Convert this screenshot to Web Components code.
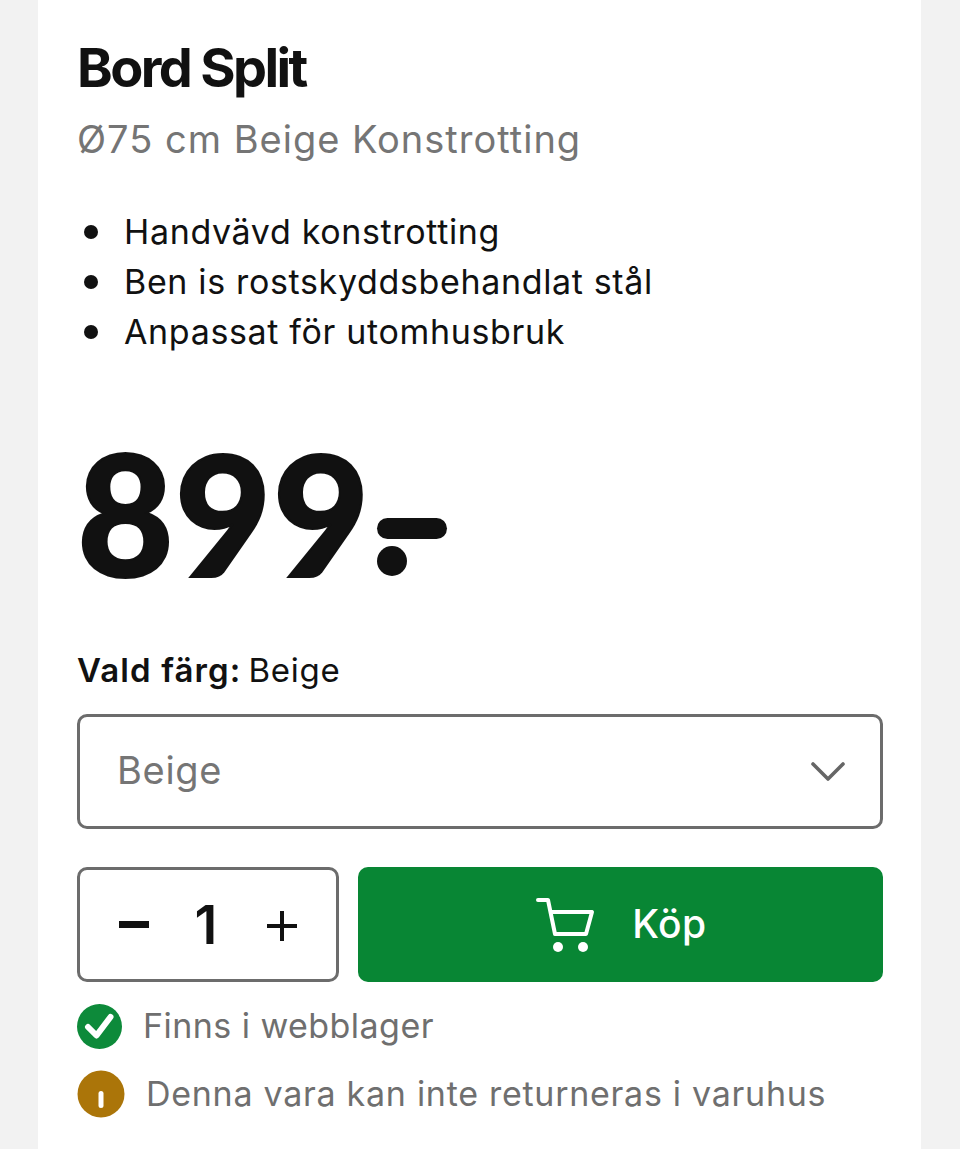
<!DOCTYPE html>
<html lang="sv"><head><meta charset="utf-8"><title>Bord Split</title>
<style>
html,body{margin:0;padding:0;height:1149px;overflow:hidden;background:#f2f2f2;font-family:Inter,"Liberation Sans",sans-serif;color:#111}
</style></head><body>
<product-card>
  <product-title slot="head" name="Bord Split" sub="Ø75 cm Beige Konstrotting"></product-title>
  <feature-list><li>Handvävd konstrotting</li><li>Ben is rostskyddsbehandlat stål</li><li>Anpassat för utomhusbruk</li></feature-list>
  <price-tag value="899"></price-tag>
  <color-select label="Vald färg:" value="Beige"></color-select>
  <buy-row qty="1" action="Köp"></buy-row>
  <status-line kind="ok" text="Finns i webblager"></status-line>
  <status-line kind="info" text="Denna vara kan inte returneras i varuhus"></status-line>
</product-card>
<script>
function def(name,html){
  customElements.define(name,class extends HTMLElement{
    connectedCallback(){
      const r=this.shadowRoot||this.attachShadow({mode:'open'});
      r.innerHTML=html(a=>this.getAttribute(a)||'');
    }
  });
}
def('product-card',()=>`<style>
:host{display:block;width:806px;height:1149px;margin-left:38px;padding:0 38px 0 39px;background:#fff;box-sizing:content-box}
</style><slot name="head"></slot><slot></slot>`);
def('product-title',a=>`<style>
:host{display:block;padding-top:39px}
h1{margin:0;font:700 54px/58px Inter,sans-serif;letter-spacing:-2.6px;color:#111}
p{margin:18px 0 0;font:400 38px/48px Inter,sans-serif;letter-spacing:1px;color:#757575}
</style><h1>${a('name')}</h1><p>${a('sub')}</p>`);
def('feature-list',()=>`<style>
:host{display:block;margin-top:44px;font:400 34px/50px Inter,sans-serif;letter-spacing:.65px;color:#111}
ul{margin:0;padding:0 0 0 7px;list-style:none}
::slotted(li){display:flex;align-items:center}
::slotted(li)::before{content:"";flex:none;width:14px;height:14px;border-radius:50%;background:#111;margin-right:26px}
</style><ul><slot></slot></ul>`);
def('price-tag',a=>`<style>
:host{display:flex;align-items:flex-end;margin-top:81px;height:150px;position:relative}
.n{font:900 167px/150px Lato,sans-serif;letter-spacing:1px;color:#111;-webkit-text-stroke:2px #111}
.m{display:flex;flex-direction:column;align-items:flex-start;gap:7px;margin:0 0 12px 6px}
.b{width:70px;height:21px;border-radius:11px;background:#111}
.d{width:30px;height:30px;border-radius:50%;background:#111}
</style><span class="n">${a('value')}</span><span class="m"><span class="b"></span><span class="d"></span></span>`);
def('color-select',a=>`<style>
:host{display:block;margin-top:60px}
.l{font:400 33px/44px Inter,sans-serif;letter-spacing:.75px;color:#111}
b{font-weight:600;letter-spacing:1.1px}
.l span{margin-left:-3px}
.s{box-sizing:border-box;height:115px;margin-top:22px;border:3px solid #6c6c6c;border-radius:10px;display:flex;align-items:center;justify-content:space-between;padding:0 35px 0 37px;font:400 38px/48px Inter,sans-serif;letter-spacing:.7px;color:#757575}
.s span{margin-top:-4px}
svg{display:block}
</style><div class="l"><b>${a('label')}</b> <span>${a('value')}</span></div><div class="s"><span>${a('value')}</span><svg width="34" height="22" viewBox="0 0 34 22"><path d="M2 3l15 15L32 3" fill="none" stroke="#666" stroke-width="3.600" stroke-linecap="round" stroke-linejoin="round"/></svg></div>`);
def('buy-row',a=>`<style>
:host{display:flex;gap:19px;margin-top:38px;height:115px}
.q{box-sizing:border-box;width:262px;flex:none;border:3px solid #6c6c6c;border-radius:10px;display:flex;align-items:center;justify-content:space-between;padding:0 39px;color:#111;font:600 54px/1 Inter,sans-serif}
.q .v{margin-right:4px}
.m{width:30px;height:7px;background:#111;display:block}
.p{position:relative;width:30px;height:30px;display:block;margin-top:2px}
.p:before,.p:after{content:"";position:absolute;background:#111}
.p:before{left:0;right:0;top:13px;height:4px}
.p:after{top:0;bottom:0;left:13px;width:4px}
.b{flex:1;background:#088634;border-radius:10px;display:flex;align-items:center;justify-content:center;gap:36px;color:#fff;font:500 39px/1 Inter,sans-serif;letter-spacing:.5px}
.b span{margin-top:-2px}
svg{display:block}
</style><div class="q"><span class="m"></span><span class="v">${a('qty')}</span><span class="p"></span></div>
<div class="b"><svg width="62" height="58" viewBox="0 0 62 58"><path d="M4 4H14L21 38H52L58 16H17" fill="none" stroke="#fff" stroke-width="4" stroke-linecap="round" stroke-linejoin="round"/><circle cx="24" cy="51" r="5" fill="#fff"/><circle cx="49" cy="51" r="5" fill="#fff"/></svg><span>${a('action')}</span></div>`);
def('status-line',a=>{
 const ok=a('kind')==='ok';
 return `<style>
:host{display:flex;align-items:center;gap:21px;margin-top:${ok?21:22}px;height:46px;font:400 34px/46px Inter,sans-serif;letter-spacing:${ok?.45:.72}px;color:#6f6f6f}
svg{display:block;flex:none}
</style>${ok?`<svg width="45" height="45" viewBox="0 0 45 45"><circle cx="22.5" cy="22.5" r="22.5" fill="#0d8a3a"/><path d="M11 23l8.500 8.500L33.500 13" fill="none" stroke="#fff" stroke-width="6" stroke-linecap="round" stroke-linejoin="round"/></svg>`:`<svg width="48" height="48" viewBox="0 0 48 48"><circle cx="24" cy="24" r="23.500" fill="#ab7509"/><rect x="21.500" y="21" width="5" height="17" rx="2.500" fill="#fff"/></svg>`}<span>${a('text')}</span>`;
});
</script>
</body></html>
